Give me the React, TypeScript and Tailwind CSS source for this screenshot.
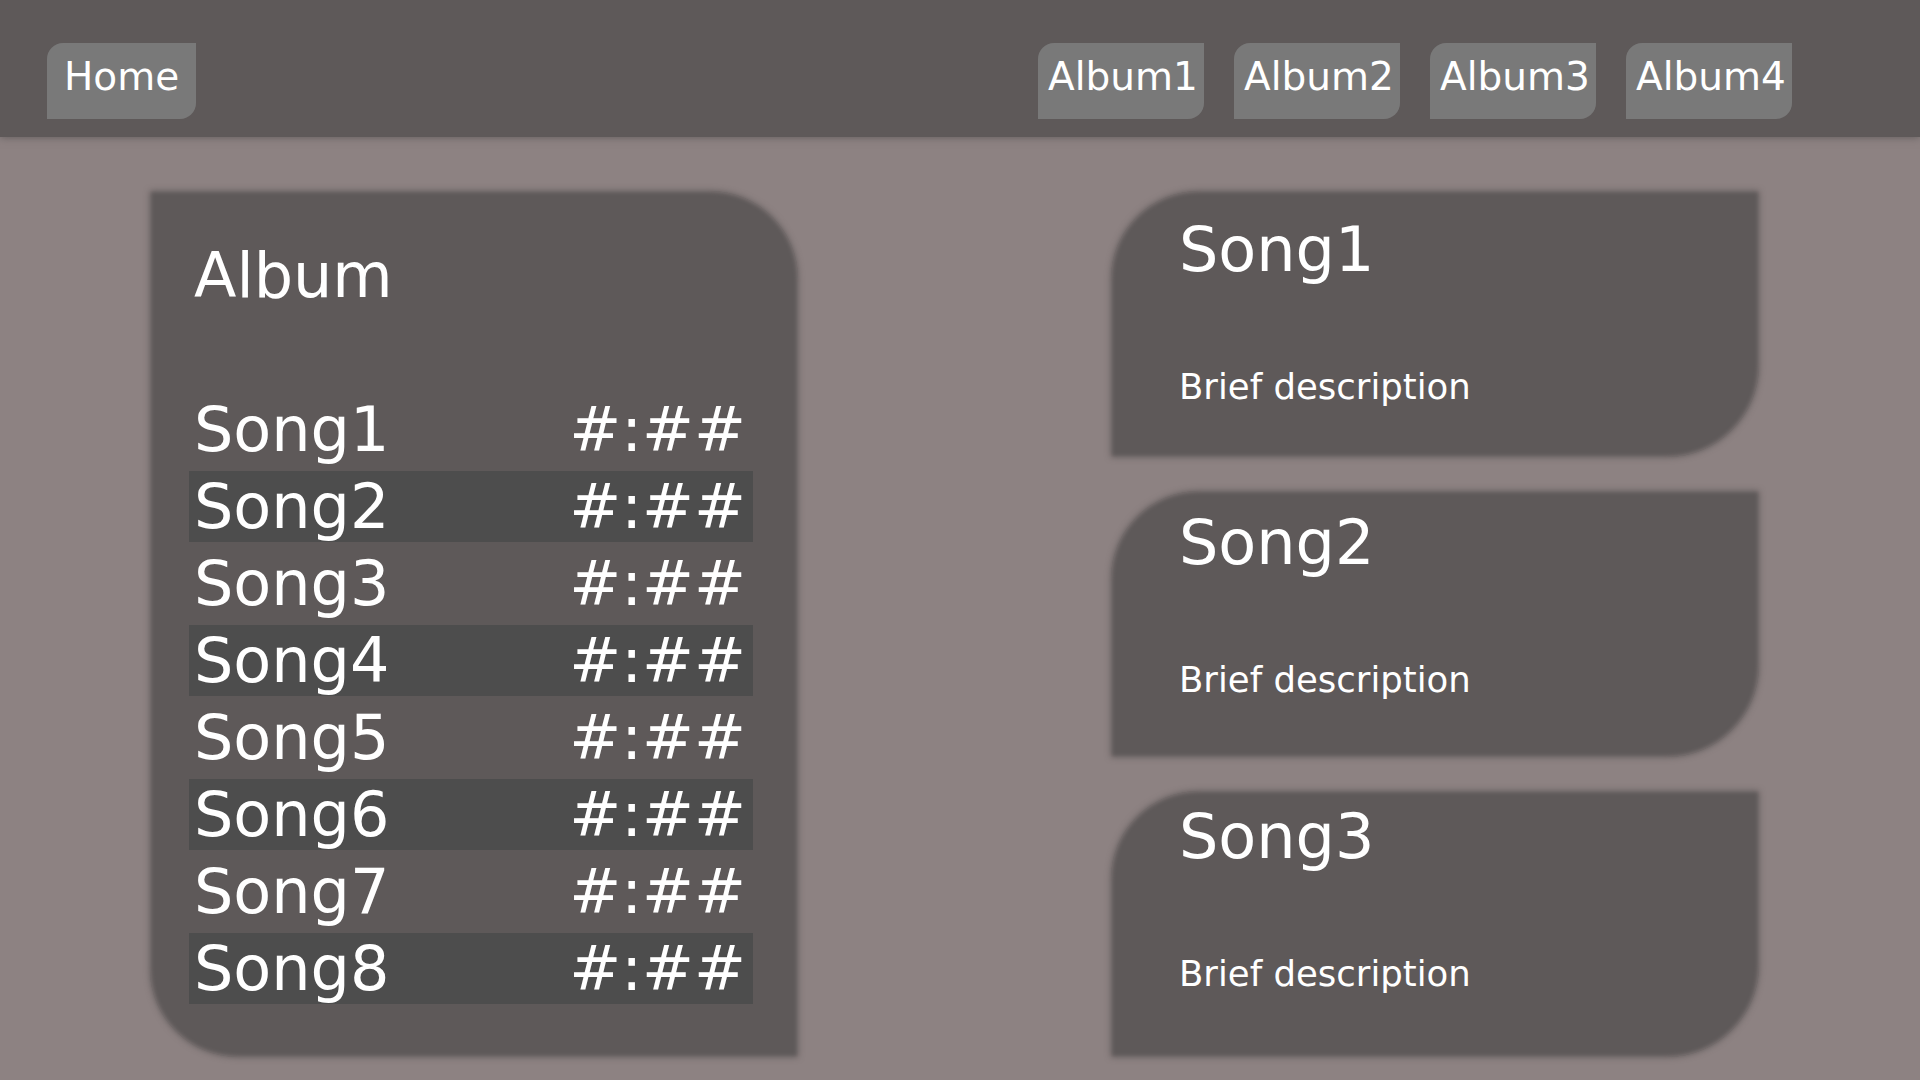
const albums = [
  { name: "Album1" },
  { name: "Album2" },
  { name: "Album3" },
  { name: "Album4" },
];

const tracks = ["Song1", "Song2", "Song3", "Song4", "Song5", "Song6", "Song7", "Song8"];

// the top padding drifts a little from card to card in the mock
const featured = [
  { title: "Song1", pad: "pt-[23px]" },
  { title: "Song2", pad: "pt-[16px]" },
  { title: "Song3", pad: "pt-[10px]" },
];

function NavButton({ label }: { label: string }) {
  return (
    <button className="h-[76px] w-full rounded-tl-[16px] rounded-br-[16px] bg-[#797979] pb-[8px] pl-[10px] text-left text-[39px] text-white">
      {label}
    </button>
  );
}

function AlbumPanel() {
  return (
    <div className="w-[648px] rounded-tr-[88px] rounded-bl-[88px] bg-[#5e5959] pt-[49px] pb-[53px] pl-[39px] pr-[45px] shadow-[0_0_6px_#5e5959,inset_0_0_5px_#8d8282]">
      <h1 className="pl-[5px] text-[62px] leading-[72px] text-white">Album</h1>
      <ul className="mt-[82px] flex flex-col gap-[6px]">
        {tracks.map((t, i) => (
          <li
            key={t}
            className={`flex h-[71px] items-center justify-between pl-[5px] pr-[7px] text-[62px] leading-[71px] text-white ${
              i % 2 === 1 ? "bg-[#4d4d4d]" : ""
            }`}
          >
            <span>{t}</span>
            <span>#:##</span>
          </li>
        ))}
      </ul>
    </div>
  );
}

function SongCard({ title, pad }: { title: string; pad: string }) {
  return (
    <div
      className={`h-[266px] w-[648px] rounded-tl-[88px] rounded-br-[92px] bg-[#5e5959] pl-[68px] text-white shadow-[0_0_6px_#5e5959,inset_0_0_5px_#8d8282] ${pad}`}
    >
      <h2 className="text-[62px] leading-[72px]">{title}</h2>
      <p className="mt-[80px] text-[35.5px] leading-[42px]">Brief description</p>
    </div>
  );
}

export default function App() {
  return (
    <div className="min-h-screen bg-[#8d8282] font-['DejaVu_Sans',sans-serif]">
      <header className="relative z-10 flex h-[137px] items-start bg-[#5e5959] pt-[43px] pl-[47px] pr-[128px] shadow-[0_0_8px_#5e5959]">
        <button className="h-[76px] w-[149px] rounded-tl-[16px] rounded-br-[16px] bg-[#797979] pb-[8px] pl-[17px] text-left text-[39px] text-white">
          Home
        </button>
        <nav className="ml-auto flex gap-[30px]">
          {albums.map((a) => (
            <div key={a.name} className="w-[166px]">
              <NavButton label={a.name} />
            </div>
          ))}
        </nav>
      </header>

      <main className="flex pt-[54px] pl-[150px] pb-[22px]">
        <AlbumPanel />
        <div className="ml-[313px] flex flex-col gap-[34px]">
          {featured.map((s) => (
            <SongCard key={s.title} title={s.title} pad={s.pad} />
          ))}
        </div>
      </main>
    </div>
  );
}
